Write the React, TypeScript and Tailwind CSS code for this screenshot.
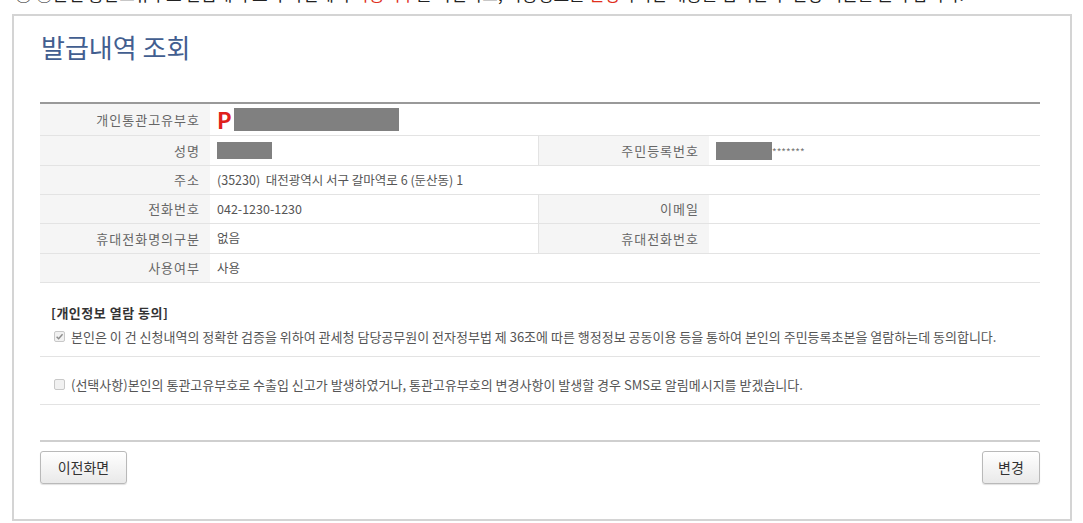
import React from 'react';

const font = { fontFamily: '"Noto Sans CJK KR", "Noto Sans", sans-serif' };

type Cell = { label: string; value: React.ReactNode };

const Label: React.FC<{ children: React.ReactNode }> = ({ children }) => (
  <div className="w-[170px] shrink-0 h-full bg-[#f5f5f5] flex items-center justify-end pr-[10px] text-[13px] tracking-[1px] text-[#666]">
    {children}
  </div>
);

const Row: React.FC<{ left: Cell; right?: Cell; h: string }> = ({ left, right, h }) => (
  <div className={`flex border-b border-[#e3e3e3] ${h}`}>
    <Label>{left.label}</Label>
    {right ? (
      <>
        <div className="w-[329px] shrink-0 h-full flex items-center pl-[7px] text-[12.5px] text-[#555] border-r border-[#e3e3e3]">
          {left.value}
        </div>
        <Label>{right.label}</Label>
        <div className="flex-1 h-full flex items-center pl-[7px] text-[12.5px] text-[#555]">{right.value}</div>
      </>
    ) : (
      <div className="flex-1 h-full flex items-center pl-[7px] text-[12.5px] text-[#555] whitespace-pre">{left.value}</div>
    )}
  </div>
);

const Redact: React.FC<{ w: string; h: string }> = ({ w, h }) => <span className={`inline-block bg-[#808080] ${w} ${h}`} />;

const CheckBox: React.FC<{ checked?: boolean }> = ({ checked }) => (
  <span className="w-[11px] h-[11px] shrink-0 rounded-[2px] border border-[#c8c8c8] bg-[#f1f1f1] flex items-center justify-center">
    {checked && (
      <svg width="9" height="9" viewBox="0 0 10 10">
        <path d="M1.8 5.2 L4 7.4 L8.4 2.4" fill="none" stroke="#8c8c8c" strokeWidth="1.6" />
      </svg>
    )}
  </span>
);

const Button: React.FC<{ children: React.ReactNode; w: string }> = ({ children, w }) => (
  <button
    type="button"
    className={`${w} h-[33px] rounded-[3px] border border-[#b9b9b9] bg-gradient-to-b from-white to-[#e9e9e9] shadow-[0_1px_1px_rgba(0,0,0,0.12)] text-[14px] text-[#333]`}
  >
    {children}
  </button>
);

export default function App() {
  return (
    <div className="w-[1083px] h-[523px] bg-white overflow-hidden" style={font}>
      {/* cropped caption of the page above */}
      <div className="h-[14px] overflow-hidden">
        <div className="-mt-[16px] pl-[15px] text-[17px] leading-[20px] text-[#222] whitespace-nowrap">
          ① ②본인 통관고유부호 발급내역 조회 화면에서{' '}
          <span className="text-[#e0301e]">사용여부</span>를 확인하고, 사용정보를{' '}
          <span className="text-[#e0301e]">변경</span>하려면 내용을 입력한 후 변경 버튼을 클릭 합니다.
        </div>
      </div>

      <div className="ml-[12px] w-[1060px] h-[507px] border-2 border-[#d4d4d4] pl-[26px] pt-[15px]">
        <h1 className="text-[26px] leading-[32px] text-[#425e90] pl-[1px]">발급내역 조회</h1>

        <div className="w-[1000px] mt-[39px]">
          <div className="border-t-2 border-[#999]">
            <Row
              h="h-[32px]"
              left={{
                label: '개인통관고유부호',
                value: (
                  <span className="flex items-center gap-[2px]">
                    <span className="text-[22px] leading-none font-bold text-[#e0201c] -mt-[1px]">P</span>
                    <Redact w="w-[165px]" h="h-[23px]" />
                  </span>
                ),
              }}
            />
            <Row
              h="h-[30px]"
              left={{ label: '성명', value: <Redact w="w-[55px]" h="h-[17px]" /> }}
              right={{
                label: '주민등록번호',
                value: (
                  <span className="flex items-center">
                    <Redact w="w-[56px]" h="h-[18px]" />
                    <span className="text-[10px] leading-none text-[#777] pt-[3px]">*******</span>
                  </span>
                ),
              }}
            />
            <Row
              h="h-[29px]"
              left={{ label: '주소', value: '(35230)  대전광역시 서구 갈마역로 6 (둔산동) 1' }}
            />
            <Row h="h-[29px]" left={{ label: '전화번호', value: '042-1230-1230' }} right={{ label: '이메일', value: '' }} />
            <Row h="h-[30px]" left={{ label: '휴대전화명의구분', value: '없음' }} right={{ label: '휴대전화번호', value: '' }} />
            <Row h="h-[29px]" left={{ label: '사용여부', value: '사용' }} />
          </div>

          <div className="mt-[22px] pl-[11px] text-[13px] leading-[16px] tracking-[0.5px] font-bold text-[#333]">[개인정보 열람 동의]</div>

          <div className="h-[36px] pb-[4px] flex items-center gap-[6px] pl-[14px] border-b border-[#e3e3e3] text-[13px] text-[#555]">
            <CheckBox checked />
            <span>
              본인은 이 건 신청내역의 정확한 검증을 위하여 관세청 담당공무원이 전자정부법 제 36조에 따른 행정정보 공동이용 등을 통하여
              본인의 주민등록초본을 열람하는데 동의합니다.
            </span>
          </div>

          <div className="h-[48px] pt-[8px] flex items-center gap-[6px] pl-[14px] border-b border-[#e3e3e3] text-[13px] text-[#555]">
            <CheckBox />
            <span>
              (선택사항)본인의 통관고유부호로 수출입 신고가 발생하였거나, 통관고유부호의 변경사항이 발생할 경우 SMS로 알림메시지를
              받겠습니다.
            </span>
          </div>

          <div className="mt-[35px] border-t-2 border-[#cfcfcf]" />

          <div className="mt-[9px] flex justify-between">
            <Button w="w-[87px]">이전화면</Button>
            <Button w="w-[58px]">변경</Button>
          </div>
        </div>
      </div>
    </div>
  );
}
